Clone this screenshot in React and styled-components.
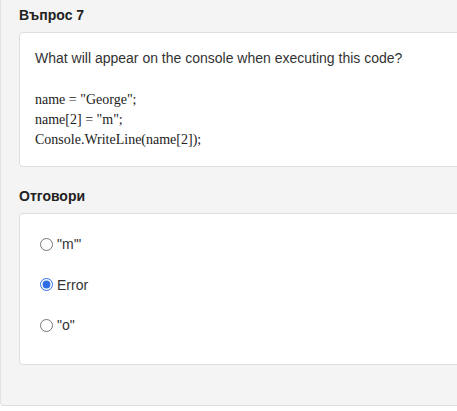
import React from 'react';
import styled, { createGlobalStyle } from 'styled-components';

const Global = createGlobalStyle`
  html, body {
    margin: 0;
    padding: 0;
    background: #fff;
    overflow: hidden;
  }
`

const Panel = styled.div`
  width: 480px;
  box-sizing: border-box;
  background: #f4f4f4;
  border-left: 1px solid #e2e2e2;
  border-bottom: 1px solid #dcdcdc;
  border-radius: 0 0 0 4px;
  padding: 0 19px 40px 18px;
  font-family: "Liberation Sans", Arial, sans-serif;
  color: #333;
`

const Heading = styled.div`
  font-size: 14px;
  font-weight: bold;
  line-height: 20px;
  padding: 5px 0 7px;
  color: #222;
`

const Card = styled.div`
  background: #fff;
  border: 1px solid #dedede;
  border-radius: 4px;
  padding: ${props => props.pad};
  margin-bottom: ${props => props.mb || 0}px;
`

const Question = styled.p`
  margin: 0 0 22px;
  font-size: 14px;
  line-height: 20px;
  color: #333;
`

const Code = styled.div`
  font-family: "Liberation Serif", "Times New Roman", serif;
  font-size: 14px;
  line-height: 20px;
  color: #222;
`

const Option = styled.label`
  display: flex;
  align-items: center;
  height: 40.5px;
  font-size: 14px;
  color: #333;
`

const Radio = styled.input`
  width: 13px;
  height: 13px;
  margin: 0 4px 0 0;
  accent-color: #2f6fe6;
`

const options = ['"m\'"', 'Error', '"o"']

const App = () => {
  const [answer, setAnswer] = React.useState(1)
  return (
    <>
      <Global />
      <Panel>
        <Heading>Въпрос 7</Heading>
        <Card pad="15px 15px 16px" mb={14}>
          <Question>What will appear on the console when executing this code?</Question>
          <Code>
            <div>name = "George";</div>
            <div>name[2] = "m";</div>
            <div>Console.WriteLine(name[2]);</div>
          </Code>
        </Card>
        <Heading>Отговори</Heading>
        <Card pad="10px 20px 18px">
          {options.map((opt, i) => (
            <Option key={i}>
              <Radio
                type="radio"
                name="answer"
                checked={answer === i}
                onChange={() => setAnswer(i)}
              />
              {opt}
            </Option>
          ))}
        </Card>
      </Panel>
    </>
  )
}

export default App;
